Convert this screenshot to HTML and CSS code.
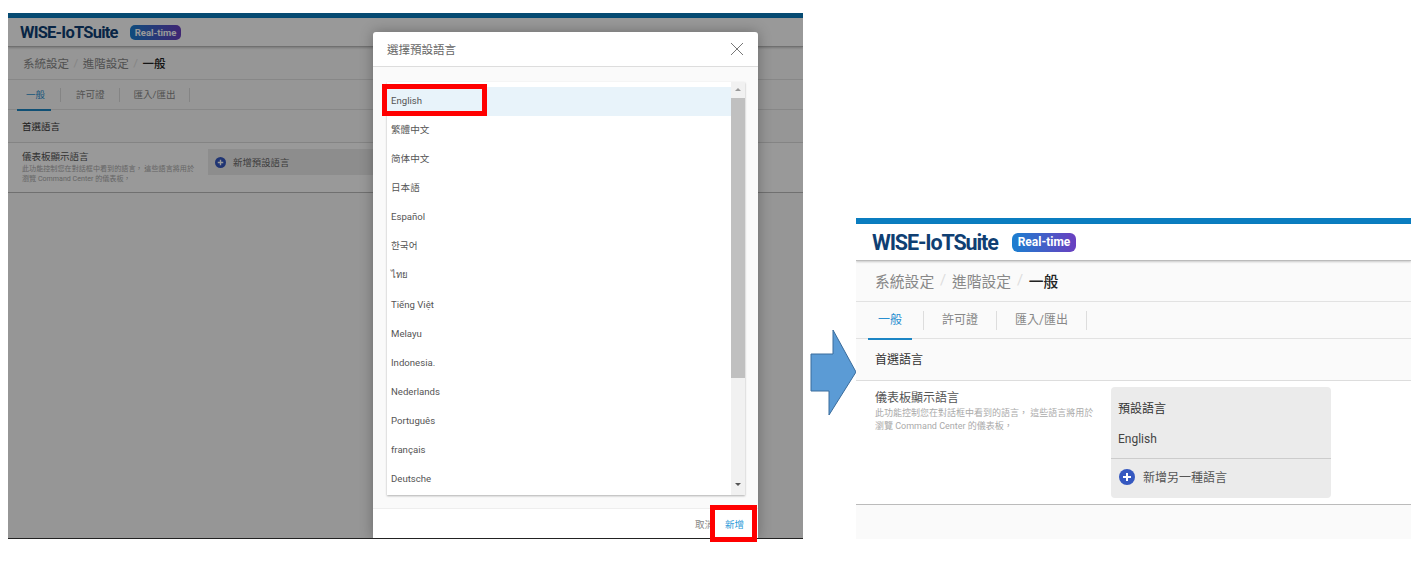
FILE: index.html

```html
<!DOCTYPE html>
<html lang="zh-Hant">
<head>
  <meta charset="UTF-8" />
  <title>WISE-IoTSuite 預設語言</title>
  <link rel="stylesheet" href="styles.css">
</head>
<body>
  <!-- left screenshot: language dialog open -->
  <div class="shot shot-left">
    <div class="topline"></div>
    <header class="brand">
      <span class="logo">WISE-IoTSuite</span>
      <span class="badge">Real-time</span>
    </header>
    <nav class="crumbs">系統設定 <i>/</i> 進階設定 <i>/</i> <b>一般</b></nav>
    <div class="tabs">
      <a class="tab active">一般</a>
      <a class="tab">許可證</a>
      <a class="tab">匯入/匯出</a>
    </div>
    <div class="section">首選語言</div>
    <div class="row">
      <div class="row-text">
        <div class="row-title">儀表板顯示語言</div>
        <p>此功能控制您在對話框中看到的語言， 這些語言將用於瀏覽 Command Center 的儀表板，</p>
      </div>
      <div class="add-bar">
        <svg class="plus" viewBox="0 0 24 24"><circle cx="12" cy="12" r="12"/><path d="M12 6v12M6 12h12"/></svg>
        新增預設語言
      </div>
    </div>
    <div class="overlay"></div>

    <div class="dialog">
      <div class="dialog-head">
        <span>選擇預設語言</span>
        <svg class="close" viewBox="0 0 14 14"><path d="M1 1l12 12M13 1L1 13"/></svg>
      </div>
      <div class="dialog-body">
        <div class="list">
          <ul>
            <li class="selected">English</li>
            <li>繁體中文</li>
            <li>简体中文</li>
            <li>日本語</li>
            <li>Español</li>
            <li>한국어</li>
            <li>ไทย</li>
            <li>Tiếng Việt</li>
            <li>Melayu</li>
            <li>Indonesia.</li>
            <li>Nederlands</li>
            <li>Português</li>
            <li>français</li>
            <li>Deutsche</li>
          </ul>
          <div class="scrollbar">
            <span class="arrow-up"></span>
            <span class="thumb"></span>
            <span class="arrow-down"></span>
          </div>
        </div>
      </div>
      <div class="dialog-foot">
        <span class="cancel">取消</span>
        <span class="confirm">新增</span>
      </div>
    </div>
  </div>

  <div class="mark mark-english"></div>
  <div class="mark mark-add"></div>

  <svg class="flow-arrow" viewBox="0 0 50 90">
    <path d="M2 26H24V2L47 44 20 87V63H2Z"/>
  </svg>

  <!-- right screenshot: result after adding the language -->
  <div class="shot shot-right">
    <div class="topline"></div>
    <header class="brand">
      <span class="logo">WISE-IoTSuite</span>
      <span class="badge">Real-time</span>
    </header>
    <nav class="crumbs">系統設定 <i>/</i> 進階設定 <i>/</i> <b>一般</b></nav>
    <div class="tabs">
      <a class="tab active">一般</a>
      <a class="tab">許可證</a>
      <a class="tab">匯入/匯出</a>
    </div>
    <div class="section">首選語言</div>
    <div class="row">
      <div class="row-text">
        <div class="row-title">儀表板顯示語言</div>
        <p>此功能控制您在對話框中看到的語言， 這些語言將用於瀏覽 Command Center 的儀表板，</p>
      </div>
      <div class="lang-card">
        <div class="lang-title">預設語言</div>
        <div class="lang-value">English</div>
        <div class="lang-add">
          <svg class="plus" viewBox="0 0 24 24"><circle cx="12" cy="12" r="12"/><path d="M12 6v12M6 12h12"/></svg>
          新增另一種語言
        </div>
      </div>
    </div>
  </div>
</body>
</html>
```

FILE: styles.css

```css
body {
  margin: 0;
  width: 1420px;
  height: 562px;
  overflow: hidden;
  position: relative;
  background: #fff;
  font-family: Roboto, "Noto Sans CJK TC", sans-serif;
  color: #333;
}

.shot {
  position: absolute;
  overflow: hidden;
  background: #fafafa;
}

.shot-left {
  left: 8px;
  top: 13px;
  width: 795px;
  height: 526px;
  border-bottom: 1px solid #222;
  box-sizing: border-box;
}

.shot-right {
  left: 856px;
  top: 218px;
  width: 555px;
  height: 321px;
}

.topline {
  background: #0a7dc0;
}

.shot-left .topline { height: 5px; }
.shot-right .topline { height: 6px; }

.brand {
  display: flex;
  align-items: center;
  background: #fff;
  border-bottom: 1px solid #bbb;
  box-shadow: 0 1px 2px rgba(0,0,0,0.2);
  box-sizing: border-box;
}

.shot-left .brand { height: 29px; padding-left: 12px; gap: 12px; }
.shot-right .brand { height: 37px; padding-left: 16px; gap: 14px; }

.logo {
  font-family: Roboto, sans-serif;
  font-weight: 700;
  color: #0f3f73;
}

.shot-left .logo { font-size: 16.5px; letter-spacing: -0.77px; }
.shot-right .logo { font-size: 21.5px; letter-spacing: -1.13px; }

.badge {
  color: #fff;
  font-weight: 700;
  background: linear-gradient(90deg, #1a7fd0, #6a3fc0);
}

.shot-left .badge { font-size: 9.5px; padding: 2px 5px; border-radius: 5px; line-height: 11px; }
.shot-right .badge { font-size: 12px; padding: 2px 6px; border-radius: 6px; line-height: 15px; }

.crumbs {
  display: flex;
  align-items: center;
  color: #888;
  border-bottom: 1px solid #e2e2e2;
  box-sizing: border-box;
}

.crumbs i { font-style: normal; color: #ddd; }
.crumbs b { font-weight: 500; color: #222; }

.shot-left .crumbs { height: 33px; padding-left: 15px; font-size: 11.5px; gap: 4.5px; }
.shot-right .crumbs { height: 41px; padding: 0 0 2px 19px; font-size: 14.8px; gap: 5.8px; }

.tabs {
  display: flex;
  align-items: center;
  border-bottom: 1px solid #e2e2e2;
  box-sizing: border-box;
}

.tab {
  color: #888;
  border-right: 1px solid #ddd;
}

.tab.active {
  color: #2a8fd0;
  position: relative;
}

.tab.active::after {
  content: "";
  position: absolute;
  left: 0;
  background: #1c85c4;
}

.shot-left .tabs { height: 30px; padding-left: 9px; font-size: 9.5px; }
.shot-left .tab { height: 14px; line-height: 14px; padding-right: 14px; margin-right: 14px; }
.shot-left .tab.active { padding: 0 15px 0 9px; margin-right: 15px; }
.shot-left .tab.active::after { width: 34px; height: 2px; bottom: -9px; }

.shot-right .tabs { height: 37px; padding-left: 12px; font-size: 12px; }
.shot-right .tab { height: 19px; line-height: 19px; padding-right: 18px; margin-right: 18px; }
.shot-right .tab.active { padding: 0 21px 0 10px; }
.shot-right .tab.active::after { width: 44px; height: 2px; bottom: -10px; }

.section {
  display: flex;
  align-items: center;
  color: #333;
  border-bottom: 1px solid #ddd;
  box-sizing: border-box;
}

.shot-left .section { height: 33px; padding-left: 14px; font-size: 9.5px; }
.shot-right .section { height: 42px; padding: 0 0 2px 19px; font-size: 12px; }

.row {
  display: flex;
  background: #fff;
  border-bottom: 1px solid #bbb;
  box-sizing: border-box;
}

.shot-left .row { height: 50px; padding: 6px 0 0 14px; }
.shot-right .row { height: 124px; padding: 6px 0 0 19px; }

.row-title { color: #555; }

.row-text p {
  margin: 0;
  color: #aaa;
}

.shot-left .row-text { width: 186px; }
.shot-left .row-title { font-size: 9.5px; line-height: 12px; margin-top: 2px; }
.shot-left .row-text p { width: 176px; font-size: 7.1px; line-height: 10px; margin-top: 1px; }

.shot-right .row-text { width: 236px; }
.shot-right .row-title { font-size: 12px; line-height: 15px; margin-top: 4px; }
.shot-right .row-text p { width: 226px; font-size: 9px; line-height: 12.5px; margin-top: 1px; }

.add-bar {
  display: flex;
  align-items: center;
  background: #ececec;
  color: #666;
}

.shot-left .add-bar { width: 330px; height: 26px; gap: 7px; padding-left: 7px; font-size: 9.4px; box-sizing: border-box; }

.plus { flex: none; }
.plus circle { fill: #3558c0; }
.plus path { stroke: #fff; stroke-width: 3; fill: none; }

.shot-left .plus { width: 11px; height: 11px; }
.shot-right .plus { width: 16px; height: 16px; }

.lang-card {
  width: 220px;
  height: 111px;
  background: #ebebeb;
  border-radius: 4px;
  font-size: 12px;
}

.lang-title {
  height: 43px;
  line-height: 44px;
  padding-left: 7px;
  color: #333;
}

.lang-value {
  height: 28px;
  line-height: 18px;
  padding-left: 7px;
  color: #444;
  border-bottom: 1px solid #ccc;
}

.lang-add {
  display: flex;
  align-items: center;
  gap: 8px;
  height: 35px;
  padding-left: 8px;
  color: #555;
}

.overlay {
  position: absolute;
  inset: 0;
  background: rgba(0,0,0,0.4);
}

.dialog {
  position: absolute;
  left: 365px;
  top: 19px;
  width: 385px;
  height: 507px;
  display: flex;
  flex-direction: column;
  background: #fff;
  border-radius: 3px 3px 0 0;
  box-shadow: 0 0 14px rgba(0,0,0,0.3);
}

.dialog-head {
  display: flex;
  justify-content: space-between;
  align-items: center;
  height: 34px;
  padding: 0 14px;
  flex: none;
  border-bottom: 1px solid #ddd;
  font-size: 11.5px;
  color: #666;
}

.close {
  width: 14px;
  height: 14px;
}

.close path {
  stroke: #777;
  stroke-width: 1;
  fill: none;
}

.dialog-body {
  flex: 1;
  background: #fafafa;
  padding: 15px 13px 14px 14px;
  min-height: 0;
  border-bottom: 1px solid #eee;
}

.list {
  display: flex;
  height: 413px;
  overflow: hidden;
  background: #fff;
  box-shadow: 0 1px 2px rgba(0,0,0,0.3);
  font-size: 9.6px;
  color: #555;
}

.list ul {
  flex: 1;
  margin: 0;
  padding: 5px 0 0;
  list-style: none;
}

.list li {
  height: 29.08px;
  line-height: 28px;
  padding-left: 4px;
}

.list li.selected { background: #e8f3fa; }

.scrollbar {
  width: 14px;
  flex: none;
  display: flex;
  flex-direction: column;
  align-items: center;
  background: #f1f1f1;
}

.thumb {
  width: 14px;
  height: 280px;
  background: #c0c0c0;
}

.arrow-up,
.arrow-down {
  width: 0;
  height: 0;
  border-left: 3px solid transparent;
  border-right: 3px solid transparent;
}

.arrow-up {
  border-bottom: 3px solid #999;
  margin: 6px 0 7px;
}

.arrow-down {
  border-top: 3px solid #555;
  margin-top: 105px;
}

.dialog-foot {
  display: flex;
  justify-content: flex-end;
  align-items: center;
  gap: 11px;
  height: 30px;
  flex: none;
  padding: 0 14px 0 0;
  font-size: 9.5px;
}

.cancel { color: #888; }
.confirm { color: #2a9ad8; }

/* red highlight boxes and arrow are annotations laid over the screenshots */
.mark {
  position: absolute;
  box-sizing: border-box;
  border: 5px solid #f00;
}

.mark-english {
  left: 382px;
  top: 84px;
  width: 105px;
  height: 32px;
}

.mark-add {
  left: 710px;
  top: 505px;
  width: 47px;
  height: 37px;
}

.flow-arrow {
  position: absolute;
  left: 809px;
  top: 328px;
  width: 50px;
  height: 90px;
}

.flow-arrow path {
  fill: #5b9bd5;
  stroke: #3a6c9c;
  stroke-width: 1;
}
```
